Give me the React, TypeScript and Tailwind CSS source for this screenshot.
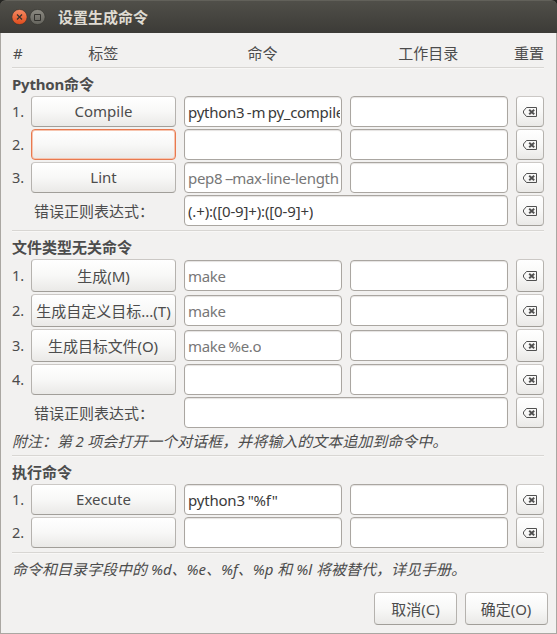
import React from "react";

const FACE = "border border-[#b5b2ae] border-t-[#cbc8c5] border-b-[#a19e99] rounded-[4px] bg-linear-to-b from-white via-[#f8f8f7] to-[#eae9e7]";
const FOCUSED_FACE = "border border-[#e8794f] rounded-[4px] bg-linear-to-b from-white via-[#f8f8f7] to-[#eae9e7] shadow-[inset_0_0_0_1px_#f6c5b0]";

function ClearIcon() {
  return (
    <svg width="14" height="10" viewBox="0 0 14 10" fill="none">
      <path d="M3.5.5h10v9h-10L.5 6V4z" stroke="#505050" />
      <path d="M6.2 2.7l5 4.6M11.2 2.7l-5 4.6" stroke="#505050" strokeWidth="1.9" />
    </svg>
  );
}

type RowProps = {
  n?: string;
  label?: string;
  labelClass?: string;
  cmd?: React.ReactNode;
  cmdClass?: string;
  hint?: boolean;
  tall?: boolean;
  focused?: boolean;
};

function Entry({ children, className = "", hint = false }: { children?: React.ReactNode; className?: string; hint?: boolean }) {
  return (
    <div
      className={
        "flex h-[31px] min-w-0 flex-1 items-center overflow-hidden rounded-[4px] border border-[#aaa6a1] bg-white pl-[3px] pr-px pt-px whitespace-pre shadow-[inset_0_1px_1px_#e5e3e1] " +
        (hint ? "text-[#777] " : "text-[#3a3a3a] ") +
        className
      }
    >
      <div className="overflow-hidden leading-6">{children}</div>
    </div>
  );
}

function ResetButton({ tall }: { tall?: boolean }) {
  return (
    <div className={"flex w-7 shrink-0 items-center justify-center " + (tall ? "h-[33px] " : "h-[31px] ") + FACE}>
      <ClearIcon />
    </div>
  );
}

function Row({ n, label, labelClass = "", cmd, cmdClass = "tracking-[-0.3px] [word-spacing:-0.8px]", hint, tall, focused }: RowProps) {
  return (
    <div className={"mb-[2px] flex items-center " + (tall ? "h-[33px]" : "h-[31px]")}>
      <div className="w-[19px] shrink-0 pb-[2px] text-[14.5px] leading-5">{n}</div>
      <div
        className={
          "mr-2 flex w-[145px] shrink-0 items-center justify-center whitespace-pre " +
          (tall ? "h-[33px] pt-px " : "h-[31px] pb-px ") +
          (focused ? FOCUSED_FACE : FACE) +
          " " +
          labelClass
        }
      >
        {label}
      </div>
      <div className="mr-2 flex min-w-0 flex-1 gap-2">
        <Entry hint={hint} className={cmdClass}>{cmd}</Entry>
        <Entry />
      </div>
      <ResetButton tall={tall} />
    </div>
  );
}

function RegexRow({ value }: { value?: string }) {
  return (
    <div className="flex h-[31px] items-center">
      <div className="w-[172px] shrink-0 pl-[22px]">错误正则表达式：</div>
      <Entry className="mr-2 tracking-[-0.15px]">{value}</Entry>
      <ResetButton />
    </div>
  );
}

function Separator() {
  return <div className="h-[2px] border-t border-[#d8d6d3] bg-[#f8f7f6]" />;
}

export default function App() {
  return (
    <div className="h-[634px] w-[557px] overflow-hidden bg-[#252522] font-['Noto_Sans','Noto_Sans_CJK_SC',sans-serif] text-[15px] leading-5 text-[#4c4c4c]">
      <div className="flex h-[33px] items-center rounded-t-[6px] border-t border-[#62615a] bg-linear-to-b from-[#504f49] to-[#3c3b37] pl-[11px]">
        <svg width="35" height="16" viewBox="0 0 35 16">
          <defs>
            <linearGradient id="close" x2="0" y2="1"><stop stopColor="#f58b65" /><stop offset="1" stopColor="#df4b1b" /></linearGradient>
            <linearGradient id="max" x2="0" y2="1"><stop stopColor="#8c8a82" /><stop offset="1" stopColor="#64635c" /></linearGradient>
          </defs>
          <circle cx="8.5" cy="8" r="7.6" fill="url(#close)" stroke="#33322e" strokeWidth=".6" />
          <path d="M6 5.5l5 5M11 5.5l-5 5" stroke="#33322e" strokeWidth="1.2" />
          <circle cx="26.5" cy="8" r="7.6" fill="url(#max)" stroke="#33322e" strokeWidth=".6" />
          <path d="M23.5 5.5h6v6h-6z" fill="none" stroke="#33322e" />
        </svg>
        <div className="-mt-px ml-3 font-bold text-[#dfdbd2]">设置生成命令</div>
      </div>
      <div className="h-[601px] border border-t-0 border-[#aaa7a2] bg-[#f2f1f0] pl-[11px] pr-3">
        <div className="flex h-[34px] items-center pt-[5px]">
          <div className="w-[19px] pl-px">#</div>
          <div className="w-[145px] text-center">标签</div>
          <div className="ml-2 w-[158px] text-center">命令</div>
          <div className="ml-2 w-[158px] text-center">工作目录</div>
          <div className="ml-[7px] w-[30px] whitespace-nowrap">重置</div>
        </div>
        <Separator />
        <div className="flex h-[27px] items-center pt-[3px] font-bold"><span className="tracking-[-0.2px]">Python</span>命令</div>
        <Row
          n="1."
          label="Compile"
          cmd="python3 -m py_compile"
          cmdClass="tracking-[-0.28px] [word-spacing:-1px]"
        />
        <Row n="2." focused />
        <Row
          n="3."
          label="Lint"
          cmd={<>pep8 <span className="tracking-[-1.2px]">--</span>max-line-length</>}
          cmdClass="tracking-[-0.3px] [word-spacing:-1px]"
          hint
        />
        <RegexRow value="(.+):([0-9]+):([0-9]+)" />
        <div className="h-1" />
        <Separator />
        <div className="flex h-[27px] items-center pt-[3px] font-bold">文件类型无关命令</div>
        <Row n="1." label="生成(M)" cmd="make" hint tall />
        <Row n="2." label="生成自定义目标...(T)" cmd="make" hint tall />
        <Row n="3." label="生成目标文件(O)" labelClass="tracking-[-0.1px] pr-px" cmd="make %e.o" hint tall />
        <Row n="4." />
        <RegexRow />
        <div className="flex h-[27px] items-center pb-[2px] whitespace-pre italic [word-spacing:-0.4px]">附注：第 2 项会打开一个对话框，并将输入的文本追加到命令中。</div>
        <Separator />
        <div className="flex h-[27px] items-center pt-[3px] font-bold">执行命令</div>
        <Row n="1." label="Execute" cmd="python3 &quot;%f&quot;" cmdClass="tracking-[-0.2px] [word-spacing:-0.8px]" />
        <Row n="2." />
        <div className="h-[2px]" />
        <Separator />
        <div className="flex h-[31px] items-center pb-[2px] whitespace-pre italic">命令和目录字段中的 %d、%e、%f、%p 和 %l 将被替代，详见手册。</div>
        <div className="-mr-1 mt-[7px] flex justify-end gap-2">
          <div className={"flex h-[33px] w-[83px] items-center justify-center pt-px " + FACE}>取消(C)</div>
          <div className={"flex h-[33px] w-[83px] items-center justify-center pt-px pr-px " + FACE}>确定(O)</div>
        </div>
      </div>
    </div>
  );
}
